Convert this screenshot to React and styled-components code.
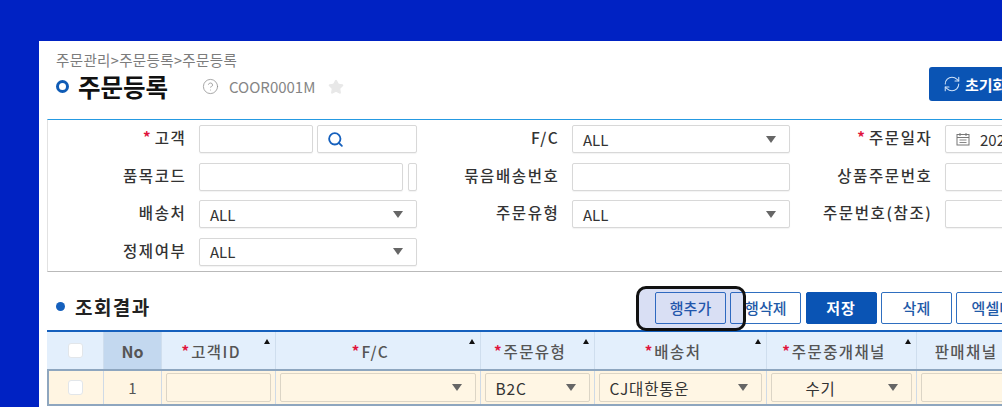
import React from "react";
import styled, { createGlobalStyle } from "styled-components";
import { CircleHelp, RefreshCw, Search, Star } from "lucide-react";

const GlobalStyle = createGlobalStyle`
  html, body {
    margin: 0;
    height: 100%;
    overflow: hidden;
    background: #0022c3;
    font-family: "Noto Sans CJK KR", "Noto Sans", sans-serif;
  }
  * { box-sizing: border-box; }
`;

const Page = styled.div`
  width: 100vw;
  height: 100vh;
  padding: 41px 0 0 39px;
  overflow: hidden;
`;

const Panel = styled.div`
  width: 1400px;
  height: 366px;
  padding: 10px 0 0 8px;
  background: #fff;
`;

const Head = styled.div`
  display: flex;
  justify-content: space-between;
  width: 972px;
  height: 68px;
  padding-left: 9px;
`;

const Crumbs = styled.div`
  height: 18px;
  color: #7c7c7c;
  font-size: 14.5px;
  line-height: 18px;
  letter-spacing: 0.35px;
  white-space: nowrap;
`;

const TitleRow = styled.div`
  display: flex;
  align-items: center;
  height: 35px;
`;

const Ring = styled.span`
  width: 13px;
  height: 13px;
  margin-right: 9px;
  border: 3.5px solid #0f5bb5;
  border-radius: 50%;
`;

const Title = styled.h1`
  width: 124px;
  margin: 0;
  color: #111;
  font-size: 24.5px;
  font-weight: 700;
  white-space: nowrap;
`;

const Code = styled.span`
  margin: 0 13px 0 10px;
  color: #858585;
  font-size: 15px;
`;

const ResetButton = styled.button`
  display: flex;
  align-items: center;
  gap: 4px;
  flex: none;
  width: 90px;
  height: 34px;
  margin-top: 16px;
  padding: 0 0 0 14px;
  border: 0;
  border-radius: 3px;
  background: #0a54b4;
  color: #fff;
  font: 700 15px "Noto Sans CJK KR", sans-serif;
  white-space: nowrap;
`;

const SearchBox = styled.div`
  display: grid;
  grid-template-columns: 137px 218px 127px 218px 127px 240px;
  grid-auto-rows: 28px;
  gap: 9.6px 14px;
  width: 1000px;
  height: 153px;
  padding: 5px 0 0 0;
  border-top: 1px solid #259ae2;
  border-left: 1px solid #e2e2e2;
  border-bottom: 1px solid #b9b9b9;
`;

const Label = styled.label`
  display: flex;
  align-items: center;
  justify-content: flex-end;
  margin-right: -1.4px;
  padding-bottom: 4px;
  color: #333;
  font-size: 15.5px;
  font-weight: 500;
  letter-spacing: 1.6px;
  line-height: 24px;
  white-space: nowrap;
`;

const Req = styled.span`
  margin-right: ${(p) => p.$gap || "4px"};
  color: #e0143c;
  font-size: 15px;
  font-weight: 700;
  letter-spacing: 0;
`;

const Field = styled.div`
  display: flex;
  align-items: center;
  flex: none;
  width: ${(p) => p.$w || "100%"};
  height: 28px;
  padding: ${(p) => (p.$bare ? "0" : "0 10px")};
  border: 1px solid #d8d8d8;
  border-radius: 2px;
  background: #fff;
  box-shadow: 0 1px 1px rgba(0, 0, 0, 0.05);
  color: #333;
  font-size: 15px;
`;

const FieldPair = styled.div`
  display: flex;
  justify-content: space-between;
`;

const SearchIcon = styled(Search)`
  margin-left: -1px;
`;

const Arrow = styled.span`
  flex: none;
  width: 0;
  height: 0;
  margin-left: auto;
  margin-right: 3px;
  border-top: 7px solid #666;
  border-left: 5.5px solid transparent;
  border-right: 5.5px solid transparent;
`;

const ResultHead = styled.div`
  display: flex;
  align-items: center;
  height: 58px;
  padding: 13px 0 0 9px;
`;

const ResultTitle = styled.h2`
  display: flex;
  align-items: center;
  gap: 10px;
  width: 599px;
  margin: 0 0 3px;
  color: #222;
  font-size: 19px;
  font-weight: 700;
  letter-spacing: 1.4px;
`;

const Dot = styled.span`
  width: 9px;
  height: 9px;
  border-radius: 50%;
  background: #1560bd;
`;

const Actions = styled.div`
  position: relative;
  display: flex;
  gap: 4.3px;
`;

const ActionButton = styled.button`
  width: ${(p) => p.$w || "71px"};
  height: 32px;
  padding: 0;
  border: 1px solid ${(p) => (p.$primary ? "#0a54b4" : "#2f6fc0")};
  border-radius: 2px;
  background: ${(p) => (p.$primary ? "#0a54b4" : "#fff")};
  color: ${(p) => (p.$primary ? "#fff" : "#1f5aa8")};
  font: ${(p) => (p.$primary ? 700 : 500)} 15px "Noto Sans CJK KR", sans-serif;
  letter-spacing: ${(p) => (p.$primary ? "1px" : "0")};
  white-space: nowrap;
`;

const Highlight = styled.div`
  position: absolute;
  top: -6px;
  left: -19px;
  width: 110px;
  height: 45px;
  border: 3px solid #111;
  border-radius: 10px;
  background: rgba(45, 75, 195, 0.18);
`;

const columns = "57px 58px 113.5px 205px 114px 172px 150px 114px 120px";

const TableHead = styled.div`
  display: grid;
  grid-template-columns: ${columns};
  width: max-content;
  height: 39px;
  border-top: 2px solid #1560bd;
`;

const HeadCell = styled.div`
  position: relative;
  display: flex;
  align-items: center;
  justify-content: center;
  padding-right: ${(p) => (p.$sort ? "14px" : "0")};
  border-right: 1px solid #cfdeee;
  background: ${(p) => p.$bg || "#e3effc"};
  color: #555;
  font-size: ${(p) => (p.$bold ? "16px" : "15.5px")};
  font-weight: ${(p) => (p.$bold ? 700 : 500)};
  letter-spacing: ${(p) => (p.$sort ? "1.4px" : "0")};
  white-space: nowrap;
`;

const SortMark = styled.span`
  position: absolute;
  top: 7px;
  right: 5px;
  width: 0;
  height: 0;
  border-bottom: 5px solid #111;
  border-left: 3.5px solid transparent;
  border-right: 3.5px solid transparent;
`;

const Check = styled.span`
  width: 15px;
  height: 15px;
  border: 1px solid #e2e6ea;
  border-radius: 3px;
  background: #fff;
`;

const Row = styled.div`
  display: grid;
  grid-template-columns: ${columns};
  width: max-content;
  height: 37px;
  outline: 2px solid #8ea6bf;
  outline-offset: -2px;
  background: #fff5e2;
`;

const Cell = styled.div`
  display: flex;
  align-items: center;
  justify-content: center;
  padding: 0 4px;
  border-right: 1px solid #cfdae6;
  color: #555;
  font-size: 15px;
`;

const CellField = styled.div`
  display: flex;
  align-items: center;
  width: 100%;
  height: 29px;
  padding: 0 10px 0 ${(p) => (p.$center ? "0" : "10px")};
  border: 1px solid #dcd5c6;
  border-radius: 2px;
  background: #fff6e4;
  color: #333;
  font-size: 15.5px;
  letter-spacing: 0.8px;
  white-space: nowrap;
`;

const CenterValue = styled.span`
  flex: 1;
  padding-right: 18px;
  text-align: center;
`;

const CalendarMark = styled.svg`
  flex: none;
  margin-right: 10px;
`;

const Calendar = () => (
  <CalendarMark width="14" height="14" viewBox="0 0 14 14">
    <rect x="1" y="2.5" width="12" height="10.5" fill="none" stroke="#777" />
    <path d="M1 5.5h12M4 1v3M10 1v3" stroke="#777" fill="none" />
    <path d="M3.5 7.5h7v1h-7zM3.5 10h7v1h-7z" fill="#888" />
  </CalendarMark>
);

const Select = ({ value }) => (
  <Field>
    {value}
    <Arrow />
  </Field>
);

const Required = ({ gap, children }) => (
  <>
    <Req $gap={gap}>*</Req>
    {children}
  </>
);

const App = () => (
  <>
    <GlobalStyle />
    <Page>
      <Panel>
        <Head>
          <div>
            <Crumbs>주문관리&gt;주문등록&gt;주문등록</Crumbs>
            <TitleRow>
              <Ring />
              <Title>주문등록</Title>
              <CircleHelp size={17} strokeWidth={1.1} color="#8f8f8f" />
              <Code>COOR0001M</Code>
              <Star size={16} fill="#e8e8e8" color="#e8e8e8" />
            </TitleRow>
          </div>
          <ResetButton>
            <RefreshCw size={18} strokeWidth={1.4} color="#cfe2f8" />
            초기화
          </ResetButton>
        </Head>

        <SearchBox>
          <Label><Required>고객</Required></Label>
          <FieldPair>
            <Field $w="114px" />
            <Field $w="100px">
              <SearchIcon size={17} strokeWidth={2.6} color="#1560bd" />
            </Field>
          </FieldPair>
          <Label>F/C</Label>
          <Select value="ALL" />
          <Label><Required>주문일자</Required></Label>
          <Field>
            <Calendar />
            2024-01-01
          </Field>

          <Label>품목코드</Label>
          <FieldPair>
            <Field $w="204px" />
            <Field $w="9px" $bare />
          </FieldPair>
          <Label>묶음배송번호</Label>
          <Field />
          <Label>상품주문번호</Label>
          <Field />

          <Label>배송처</Label>
          <Select value="ALL" />
          <Label>주문유형</Label>
          <Select value="ALL" />
          <Label>주문번호(참조)</Label>
          <Field />

          <Label>정제여부</Label>
          <Select value="ALL" />
        </SearchBox>

        <ResultHead>
          <ResultTitle>
            <Dot />
            조회결과
          </ResultTitle>
          <Actions>
            <ActionButton>행추가</ActionButton>
            <ActionButton>행삭제</ActionButton>
            <ActionButton $primary>저장</ActionButton>
            <ActionButton>삭제</ActionButton>
            <ActionButton $w="86px">엑셀다운</ActionButton>
            <Highlight />
          </Actions>
        </ResultHead>

        <TableHead>
          <HeadCell><Check /></HeadCell>
          <HeadCell $bg="#c3d8ef" $bold>No</HeadCell>
          <HeadCell $sort><Required gap="2px">고객ID</Required><SortMark /></HeadCell>
          <HeadCell $sort><Required gap="2px">F/C</Required><SortMark /></HeadCell>
          <HeadCell $sort><Required gap="2px">주문유형</Required><SortMark /></HeadCell>
          <HeadCell $sort><Required gap="2px">배송처</Required><SortMark /></HeadCell>
          <HeadCell $sort><Required gap="2px">주문중개채널</Required><SortMark /></HeadCell>
          <HeadCell $sort>판매채널<SortMark /></HeadCell>
          <HeadCell />
        </TableHead>
        <Row>
          <Cell><Check /></Cell>
          <Cell>1</Cell>
          <Cell><CellField /></Cell>
          <Cell><CellField><Arrow /></CellField></Cell>
          <Cell><CellField>B2C<Arrow /></CellField></Cell>
          <Cell><CellField>CJ대한통운<Arrow /></CellField></Cell>
          <Cell><CellField $center><CenterValue>수기</CenterValue><Arrow /></CellField></Cell>
          <Cell><CellField /></Cell>
          <Cell />
        </Row>
      </Panel>
    </Page>
  </>
);

export default App;
